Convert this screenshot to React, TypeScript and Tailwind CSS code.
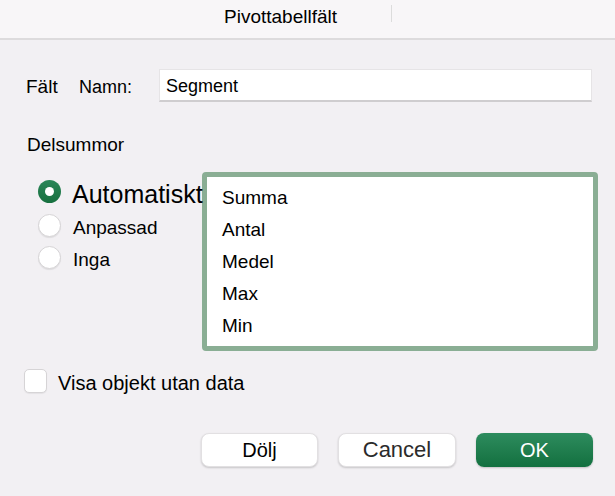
import { useState } from 'react'

const subtotals = ['Summa', 'Antal', 'Medel', 'Max', 'Min']

function Radio({ checked }: { checked?: boolean }) {
  if (checked) {
    return (
      <span className="w-[23px] h-[23px] shrink-0 rounded-full bg-gradient-to-b from-[#2a8658] to-[#17703f] flex items-center justify-center">
        <span className="w-[9px] h-[9px] rounded-full bg-white" />
      </span>
    )
  }
  return (
    <span className="w-[23px] h-[23px] shrink-0 rounded-full bg-white border border-[#d6d4d6] shadow-[0_1px_1px_rgba(0,0,0,0.08)]" />
  )
}

export default function App() {
  const [name, setName] = useState('Segment')
  const [mode, setMode] = useState('auto')
  const [showEmpty, setShowEmpty] = useState(false)

  return (
    <div className="w-[615px] h-[496px] bg-[#f2f0f3] text-black font-['Liberation_Sans',Arial,sans-serif] overflow-hidden">
      {/* title bar */}
      <div className="h-[40px] bg-[#f8f6f8] border-b-2 border-[#dddbdd] flex items-start">
        <span className="ml-[224px] mt-[6px] text-[19px] leading-[22px]">Pivottabellfält</span>
        <span className="ml-[54px] mt-[5px] w-px h-[17px] bg-[#dcdcdc]" />
      </div>

      {/* name row */}
      <div className="mt-[29px] h-[33px] flex items-center">
        <span className="pl-[26px] w-[79px] text-[19px] leading-none mt-[1px]">Fält</span>
        <span className="w-[80px] text-[18px] leading-none mt-[3px]">Namn:</span>
        <input
          value={name}
          onChange={(e) => setName(e.target.value)}
          className="w-[433px] h-[33px] bg-white border border-[#e6e4e6] border-b-2 border-b-[#cfcdcf] pl-[6px] pt-[3px] text-[18px] outline-none"
        />
      </div>

      <div className="pl-[27px] mt-[32px] text-[19px] leading-[22px]">Delsummor</div>

      {/* subtotals */}
      <div className="mt-[16px] flex">
        <div className="w-[202px] shrink-0 pl-[38px] pt-[8px] relative z-10 flex flex-col">
          <button onClick={() => setMode('auto')} className="h-[23px] flex items-center gap-[11px] text-left">
            <Radio checked={mode === 'auto'} />
            <span className="text-[25px] leading-none mt-[5px] whitespace-nowrap">Automatiskt</span>
          </button>
          <button onClick={() => setMode('custom')} className="h-[23px] mt-[11px] flex items-center gap-[12px] text-left">
            <Radio checked={mode === 'custom'} />
            <span className="text-[19px] leading-none mt-[3px]">Anpassad</span>
          </button>
          <button onClick={() => setMode('none')} className="h-[23px] mt-[9px] flex items-center gap-[12px] text-left">
            <Radio checked={mode === 'none'} />
            <span className="text-[19px] leading-none mt-[4px]">Inga</span>
          </button>
        </div>
        <div className="w-[396px] h-[179px] border-[5px] border-[#8aae94] rounded-[4px] bg-white pl-[15px] pt-[5px]">
          {subtotals.map((s) => (
            <div key={s} className="text-[19px] leading-[32px]">{s}</div>
          ))}
        </div>
      </div>

      {/* checkbox */}
      <label className="mt-[17px] pl-[24px] flex items-center gap-[11px] cursor-pointer">
        <input type="checkbox" checked={showEmpty} onChange={(e) => setShowEmpty(e.target.checked)} className="sr-only" />
        <span className="w-[23px] h-[24px] rounded-[5px] bg-white border border-[#d6d4d6] shadow-[0_1px_1px_rgba(0,0,0,0.06)]" />
        <span className="text-[20px] leading-none mt-[5px]">Visa objekt utan data</span>
      </label>

      {/* buttons */}
      <div className="mt-[40px] pl-[201px] flex gap-[20px]">
        <button className="w-[117px] h-[34px] rounded-[8px] bg-white border border-[#e2e0e2] shadow-[0_1px_2px_rgba(0,0,0,0.18)] text-[20px] leading-none">
          Dölj
        </button>
        <button className="w-[118px] h-[34px] rounded-[8px] bg-white border border-[#e2e0e2] shadow-[0_1px_2px_rgba(0,0,0,0.18)] text-[22px] leading-none text-[#2b2b2b]">
          Cancel
        </button>
        <button className="w-[117px] h-[34px] rounded-[8px] bg-gradient-to-b from-[#2d8c5e] to-[#12703f] shadow-[0_1px_2px_rgba(0,0,0,0.2)] text-[20px] leading-none text-white">
          OK
        </button>
      </div>
    </div>
  )
}
